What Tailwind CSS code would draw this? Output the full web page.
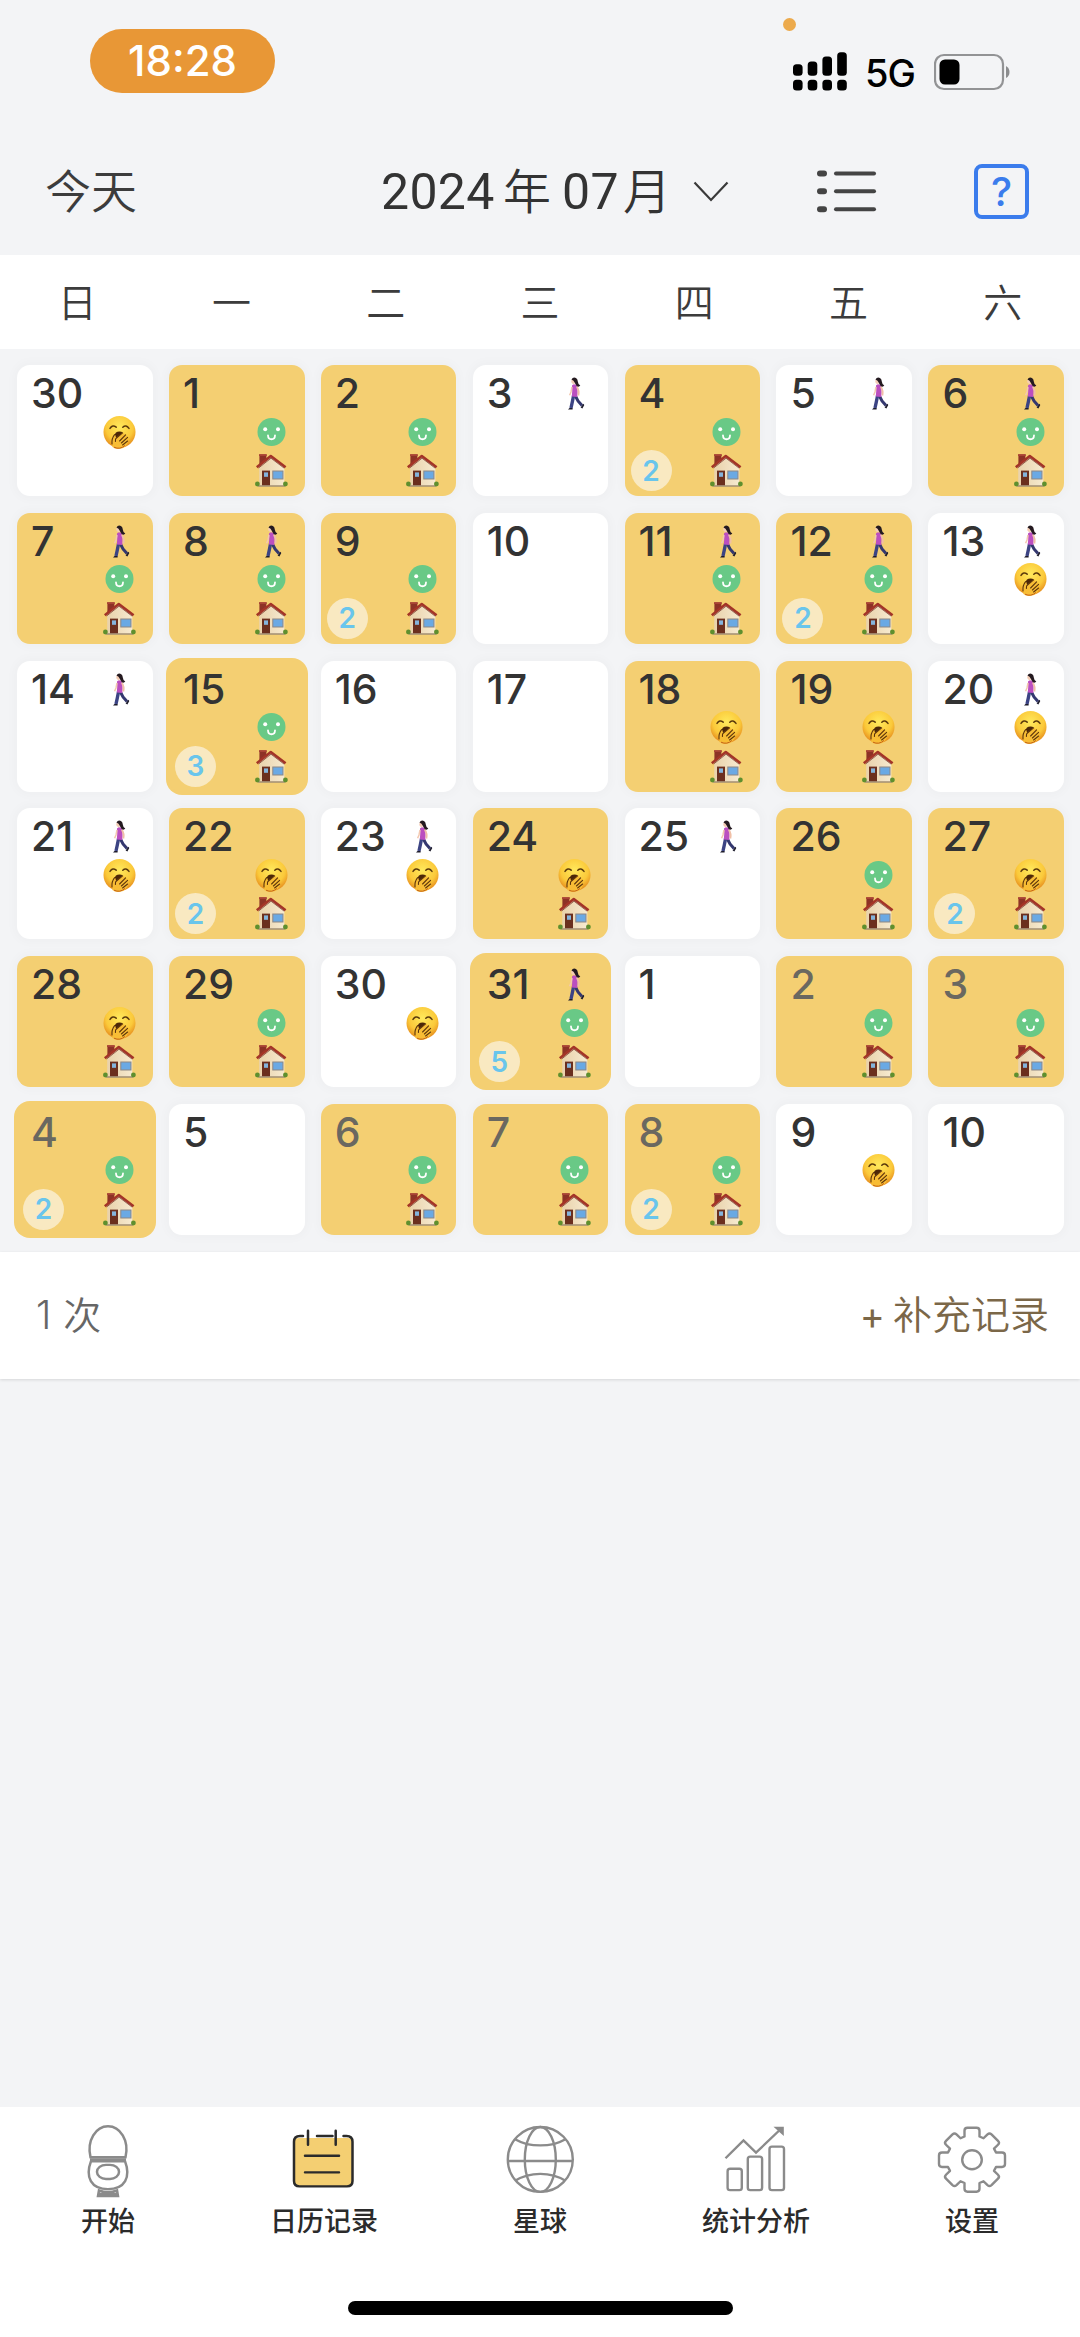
<!DOCTYPE html>
<html lang="zh-CN">
<head>
	<meta charset="UTF-8">
	<meta name="viewport" content="width=device-width, initial-scale=1.0">
	<title>日历记录</title>
	<script src="https://cdn.jsdelivr.net/npm/@tailwindcss/browser@4"></script>
</head>
	<body class="bg-[#f3f4f6] font-['Inter','Noto_Sans_CJK_SC',sans-serif] text-[#333]">
		<!-- emoji used inside the day cells -->
		<svg class="absolute size-0">
			<defs>
				<radialGradient id="faceFill" cx="0.5" cy="0.35" r="0.65">
					<stop offset="0" stop-color="#ffe95c" />
					<stop offset="0.65" stop-color="#fbc93a" />
					<stop offset="1" stop-color="#e58a1c" />
				</radialGradient>
				<linearGradient id="wallFill" x1="0" y1="0" x2="1" y2="0">
					<stop offset="0" stop-color="#e9d2ab" />
					<stop offset="1" stop-color="#f6ead0" />
				</linearGradient>
			</defs>
			<symbol id="walk" viewBox="0 0 33 33">
				<path d="M17.4 19 L20 24 L24 28.5" stroke="#34386f" stroke-width="3" fill="none" />
				<path d="M15.6 18.5 L14.3 25 L13 31" stroke="#3c4484" stroke-width="3.4" fill="none" />
				<path d="M10 32.6 L11.5 31 H14.6 V32.6Z M22.6 30.4 L25.4 26.8 L26.3 28 L24.4 31.4Z" fill="#1c1b2b" />
				<path d="M14 8.5 Q16 6.5 18.6 8 Q20.2 12 19.3 20 L13.8 19.4 Q14.6 14 14 8.5Z" fill="#bb4fc0" />
				<path d="M18.8 9.5 Q21.6 14 20.4 18.5" stroke="#f0bfa6" stroke-width="1.7" fill="none" />
				<path d="M14 10 L13 15 L11.6 18.2" stroke="#f3c8b0" stroke-width="1.5" fill="none" />
				<path d="M13.6 2.6 Q15.5 1.2 17 3 L16.6 7.4 L14.2 6.4 L13.2 5Z" fill="#f5cdb6" />
				<path d="M13.5 2.4 Q15 -0.2 18 1 Q19.8 2.2 19.8 4.6 Q20 7.4 22.3 8.6 Q20.8 10.6 18.6 9 L16.6 5.6 Q16 3.2 13.5 2.4Z" fill="#241a20" />
			</symbol>
			<symbol id="smile" viewBox="0 0 33 33">
				<circle cx="16.5" cy="16" r="14" fill="#69c986" />
				<circle cx="10.2" cy="13.3" r="2" fill="#fff" />
				<circle cx="23" cy="13.3" r="2" fill="#fff" />
				<path d="M13 19.5 C13.2 24.5 19.8 24.5 20 19.5" stroke="#fff" stroke-width="1.8" stroke-linecap="round" fill="none" />
			</symbol>
			<symbol id="yawn" viewBox="0 0 33 33">
				<circle cx="16.5" cy="16" r="16" fill="url(#faceFill)" />
				<path d="M7 12.4 Q9.6 8.2 13.2 11.2 M19.8 11.2 Q23 8.2 26 12.4" stroke="#5b3a0c" stroke-width="1.5" stroke-linecap="round" fill="none" />
				<path d="M11.5 20 Q12 15.6 16.5 15.6 Q21 15.6 20 21 L14 23Z" fill="#4c2708" />
				<path d="M9.5 31 Q8 24 11.5 18.8 Q13.2 18.8 12.6 22.5 L19.5 16.8 L22 18.2 L24.5 20.6 L25.2 24.4 Q24 31.5 17 32.8 Q12 33.4 9.5 31Z" fill="#f8bd35" />
				<path d="M9 28 Q8.4 22.5 11.6 18.6 M12.6 22.8 L19.6 16.8 M16.6 25 L22.6 18.8 M18.4 27 L24.6 21.4 M19.6 29 L24.6 25 M12.6 22.8 L12.4 25.4" stroke="#5d350b" stroke-width="1.1" stroke-linecap="round" fill="none" />
				<path d="M11 31.2 Q17 34 22 29.4" stroke="#c4631a" stroke-width="1" fill="none" />
			</symbol>
			<symbol id="house" viewBox="0 0 33 33">
				<path d="M4.4 0.6 H11.4 V8 L4.4 12Z" fill="#8d3226" />
				<path d="M4 0.2 H11.8 V2 H4Z" fill="#a94335" />
				<path d="M4.2 12 L16 2.6 L29.3 13 V31.8 H4.2Z" fill="url(#wallFill)" />
				<path d="M1.8 13.2 L15.8 2 L30.6 13.2" stroke="#a33427" stroke-width="2.6" stroke-linejoin="round" fill="none" />
				<path d="M3.6 14 L16 4.200 L29.2 14.2" stroke="#6e2a20" stroke-width="0.7" fill="none" />
				<rect x="7" y="16.6" width="8" height="15" fill="#6b2f1e" />
				<rect x="9" y="18.4" width="4" height="4.4" fill="#84b4dc" />
				<rect x="17.8" y="17" width="10.2" height="8" fill="#6aa9e4" stroke="#8e8783" stroke-width="1" />
				<path d="M3 32 H30" stroke="#9b8a76" stroke-width="1.4" />
				<circle cx="2.4" cy="30" r="2.4" fill="#5f8f2e" />
				<circle cx="30.4" cy="30" r="2.4" fill="#5f8f2e" />
			</symbol>
		</svg>

		<main class="flex h-[2337px] w-[1080px] flex-col overflow-hidden">
			<!-- status bar -->
			<div class="relative flex h-[120px] shrink-0 items-start justify-between pt-[29px] pr-[70px] pl-[90px]">
				<div class="flex h-[64px] w-[185px] items-center justify-center rounded-full bg-[#e89736] pb-px text-[42px] font-medium text-white">18:28</div>
				<span class="absolute top-[18px] left-[783px] size-[13px] rounded-full bg-[#ecaa4c]"></span>
				<div class="flex items-center pt-[20px]">
					<svg class="h-[44px] w-[56px]" viewBox="0 0 56 44">
						<rect x="0" y="15.300" width="9.600" height="11.500" rx="3.500" />
						<rect x="14.700" y="12.600" width="9.600" height="14.200" rx="3.500" />
						<rect x="29.400" y="7.600" width="9.600" height="19.200" rx="3.500" />
						<rect x="44.200" y="3.200" width="9.600" height="23.600" rx="3.500" />
						<rect x="0" y="30.800" width="9.600" height="10.600" rx="3.500" />
						<rect x="14.700" y="30.800" width="9.600" height="10.600" rx="3.500" />
						<rect x="29.400" y="30.800" width="9.600" height="10.600" rx="3.500" />
						<rect x="44.200" y="30.800" width="9.600" height="10.600" rx="3.500" />
					</svg>
					<span class="ml-[16px] w-[69px] pt-1 text-[38px] leading-none font-medium tracking-[-1px] text-black">5G</span>
					<svg class="h-[40px] w-[76px]" viewBox="0 0 76 40">
						<rect x="1" y="4" width="68" height="34" rx="9" fill="none" stroke="#929395" stroke-width="2.200" />
						<rect x="5.500" y="8.500" width="20" height="25" rx="5.500" />
						<path d="M72 15 Q75.500 17 75.500 21 Q75.500 25 72 27Z" fill="#8b8c8e" />
					</svg>
				</div>
			</div>

			<!-- month header -->
			<header class="flex h-[135px] shrink-0 items-center pl-[45px]">
				<a class="relative top-[3px] w-[336px] text-[46px] leading-[68px] font-[350] text-[#3c3c3c]">今天</a>
				<h1 class="relative top-[4px] flex w-[312px] items-center text-[48px] leading-[68px] text-[#333]">
					<span class="w-[122px] font-['Roboto'] text-[50px] tracking-[0.300px]">2024</span>
					<span class="w-[59px] font-[350]">年</span>
					<span class="w-[61px] font-['Roboto'] text-[50px] tracking-[0.300px]">07</span>
					<span class="font-[350]">月</span>
				</h1>
				<svg class="h-[64px] w-[36px]" viewBox="0 0 36 64" fill="none" stroke="#3a3a3a" stroke-width="2.200">
					<path d="M1.500 26.500 L18 44 L34.500 26.500" />
				</svg>
				<svg class="ml-[88px] h-[64px] w-[60px]" viewBox="0 0 60 64" fill="#444">
					<rect x="0" y="14.500" width="10" height="6" rx="3" />
					<rect x="17" y="15.500" width="42" height="4" rx="2" />
					<rect x="0" y="32.200" width="10" height="6" rx="3" />
					<rect x="17" y="33.200" width="42" height="4" rx="2" />
					<rect x="0" y="50.200" width="10" height="6" rx="3" />
					<rect x="17" y="51.200" width="42" height="4" rx="2" />
				</svg>
				<div class="relative top-[4px] ml-[97px] flex h-[55px] w-[55px] items-center justify-center rounded-lg border-4 border-[#3b7cec] text-[40px] leading-none font-medium text-[#3b7cec]">?</div>
			</header>

			<!-- weekday names -->
			<div class="grid h-[94px] shrink-0 grid-cols-7 items-center bg-white text-center text-[39px] leading-none font-[350] text-[#3c3c3c]">
				<span>日</span><span>一</span><span>二</span><span>三</span><span>四</span><span>五</span><span>六</span>
			</div>

			<ul id="days" class="grid h-[903px] shrink-0 grid-cols-7 content-start gap-x-[16.300px] gap-y-[16.800px] pt-[16px] pr-[16px] pl-[17px]"></ul>

			<div class="flex h-[127px] shrink-0 items-center justify-between bg-white pr-[31px] pl-[36px] shadow-[0_1px_3px_rgba(0,0,0,0.12)]">
				<p class="flex items-center gap-[12px] text-[38px] font-[350] text-[#666]"><span class="text-[39px] font-light">1</span><span>次</span></p>
				<a class="flex items-center gap-[8px] text-[39px] font-[350] text-[#7b6748]"><span class="text-[38px] font-normal">+</span><span>补充记录</span></a>
			</div>

			<!-- tab bar -->
			<nav class="mt-auto flex h-[230px] shrink-0 flex-col bg-white">
				<div class="grid h-[194px] grid-cols-5 content-start pt-[14px] text-center text-[27px] leading-[40px] font-medium text-[#2b2b2b]">
					<a class="flex flex-col items-center gap-[3px]">
						<svg class="h-[77.500px] w-[80px]" viewBox="0 0 80 80" preserveAspectRatio="none" fill="none" stroke="#8b8b8b" stroke-width="2.500">
							<path d="M22.500 37.500 C18.500 20 28 5.500 40 5.500 S61.500 20 57.500 37.500Z" />
							<path d="M22 39.800 H58" />
							<path d="M23 41.500 H57 C63 58 57 70.300 40 70.300 S17 58 23 41.500Z" />
							<rect x="29" y="45.300" width="22" height="14.500" rx="9" ry="7.200" />
							<path d="M31 71.500 Q40 75 49 71.500 L50 77.500 H30Z M30.500 75 H49.500" />
						</svg>
						<span>开始</span>
					</a>
					<a class="flex flex-col items-center gap-[3px]">
						<svg class="h-[77.500px] w-[80px]" viewBox="0 0 80 80" preserveAspectRatio="none" fill="none" stroke="#2b2b2b" stroke-width="2.500" stroke-linecap="round">
							<rect x="10" y="17.500" width="58.500" height="50" rx="5" fill="#f4cf72" stroke="none" />
							<path d="M19 15.500 H16 Q10 15.500 10 21.500 V62 Q10 67.500 15.500 67.500 H63 Q68.500 67.500 68.500 62 V21.500 Q68.500 15.500 62.500 15.500 H59.500 M33 15.500 H48.500" />
							<path d="M24 10 V24.500 M51.700 10 V24.500 M21 35.800 H55 M21 53 H55" />
						</svg>
						<span>日历记录</span>
					</a>
					<a class="flex flex-col items-center gap-[3px]">
						<svg class="h-[77.500px] w-[80px]" viewBox="0 0 80 80" preserveAspectRatio="none" fill="none" stroke="#8b8b8b" stroke-width="2.400">
							<ellipse cx="40.300" cy="39.700" rx="32.500" ry="33.500" />
							<ellipse cx="40.300" cy="39.700" rx="15.500" ry="33.500" />
							<path d="M8 41.300 H73 M15.500 19 Q26 25.200 40.300 25.200 T65 19 M15.500 61.500 Q26 54.500 40.300 54.500 T65 61.500" />
						</svg>
						<span>星球</span>
					</a>
					<a class="flex flex-col items-center gap-[3px]">
						<svg class="h-[77.500px] w-[80px]" viewBox="0 0 80 80" preserveAspectRatio="none" fill="none" stroke="#8b8b8b" stroke-width="2.400">
							<rect x="11.600" y="49.300" width="14.200" height="22" rx="2.500" />
							<rect x="31.800" y="36.800" width="14.300" height="34.500" rx="2.500" />
							<rect x="53.500" y="26.500" width="14.500" height="44.800" rx="2.500" />
							<path d="M9.500 38.500 L27.500 20 L40 32.700 L64 9" />
							<path d="M57.500 6 H67.800 V15.500Z" fill="#8b8b8b" stroke="none" />
						</svg>
						<span>统计分析</span>
					</a>
					<a class="flex flex-col items-center gap-[3px]">
						<svg class="h-[77.500px] w-[80px]" viewBox="0 0 80 80" preserveAspectRatio="none" fill="none" stroke="#8b8b8b" stroke-width="2.400" stroke-linejoin="round">
							<path d="M32.500 16 V10 Q32.500 7 35.500 7 H44.500 Q47.500 7 47.500 10 V16 L51.500 17.800 L55.500 13.800 Q57.500 12 59.500 13.800 L66 20.500 Q68 22.500 66 24.500 L62 28.500 L64 32.500 H70 Q73 32.500 73 35.500 V44.500 Q73 47.500 70 47.500 H64 L62 51.500 L66 55.500 Q68 57.500 66 59.500 L59.500 66.200 Q57.500 68 55.500 66.200 L51.500 62.200 L47.500 64 V70 Q47.500 73 44.500 73 H35.500 Q32.500 73 32.500 70 V64 L28.500 62.200 L24.500 66.200 Q22.500 68 20.500 66.200 L14 59.500 Q12 57.500 14 55.500 L18 51.500 L16 47.500 H10 Q7 47.500 7 44.500 V35.500 Q7 32.500 10 32.500 H16 L18 28.500 L14 24.500 Q12 22.500 14 20.500 L20.500 13.800 Q22.500 12 24.500 13.800 L28.500 17.800Z" />
							<circle cx="40" cy="40" r="9.800" />
						</svg>
						<span>设置</span>
					</a>
				</div>
				<div class="mx-auto h-[14px] w-[385px] rounded-full bg-black"></div>
			</nav>
		</main>

		<script>
			// day, icons (w = walk, s = smile, y = yawn, h = house), count, flags (m = muted, r = raised)
			const days = [
				[30, 'y'], [1, 'sh'], [2, 'sh'], [3, 'w'], [4, 'sh', 2], [5, 'w'], [6, 'wsh'],
				[7, 'wsh'], [8, 'wsh'], [9, 'sh', 2], [10, ''], [11, 'wsh'], [12, 'wsh', 2], [13, 'wy'],
				[14, 'w'], [15, 'sh', 3, 'r'], [16, ''], [17, ''], [18, 'yh'], [19, 'yh'], [20, 'wy'],
				[21, 'wy'], [22, 'yh', 2], [23, 'wy'], [24, 'yh'], [25, 'w'], [26, 'sh'], [27, 'yh', 2],
				[28, 'yh'], [29, 'sh'], [30, 'y'], [31, 'wsh', 5, 'r'], [1, ''], [2, 'sh', 0, 'm'], [3, 'sh', 0, 'm'],
				[4, 'sh', 2, 'mr'], [5, ''], [6, 'sh', 0, 'm'], [7, 'sh', 0, 'm'], [8, 'sh', 2, 'm'], [9, 'y'], [10, ''],
			];

			const icon = (name) => `<svg class="size-[33px]"><use href="#${name}" /></svg>`;
			const empty = '<span class="size-[33px]"></span>';

			const ul = document.getElementById('days');

			days.forEach(([day, icons, count, flags = '']) => {
				const li = document.createElement('li');
				const background = icons.includes('h') ? 'bg-[#f4cf72]' : 'bg-white';
				const raised = flags.includes('r') ? 'ring-3 ring-[#f4cf72]' : 'shadow-[0_0_10px_4px_rgba(0,0,0,0.018)]';
				const color = flags.includes('m') ? 'text-[#6a6860]' : 'text-[#333]';
				li.className = `relative flex h-[131px] justify-between rounded-[13px] pt-[12px] pr-[17px] pl-[14px] ${background} ${raised}`;

				li.innerHTML = `
				<span class="text-[41px] leading-[32px] font-medium ${color}">${day}</span>
				<div class="flex flex-col gap-[5.500px]">
					${icons.includes('w') ? icon('walk') : empty}
					${icons.includes('s') ? icon('smile') : icons.includes('y') ? icon('yawn') : empty}
					${icons.includes('h') ? icon('house') : empty}
				</div>
				${count ? `<span class="absolute bottom-[5px] left-[6px] flex size-[41px] items-center justify-center rounded-full bg-[#f9e9c1] text-[28px] font-semibold text-[#69c5ec]">${count}</span>` : ''}
				`;

				ul.appendChild(li);
			});
		</script>
	</body>
</html>
